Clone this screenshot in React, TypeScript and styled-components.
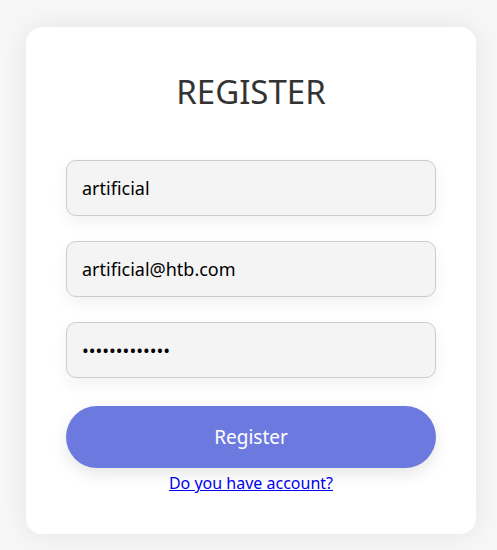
import React from "react";
import styled, { createGlobalStyle } from "styled-components";

const Global = createGlobalStyle`
  html, body { margin: 0; padding: 0; background: #f7f7f7; }
  body { font-family: "Noto Sans", "Open Sans", sans-serif; }
`;

const Page = styled.div`
  padding: 27px 21px 16px 26px;
`;

const Card = styled.form`
  background: #fff;
  border-radius: 16px;
  box-shadow: 0 0 30px rgba(0, 0, 0, 0.08);
  padding: 42px 40px 39px;
  display: flex;
  flex-direction: column;
  align-items: stretch;
`;

const Title = styled.h2`
  margin: 0 0 45px;
  text-align: center;
  font-size: 33px;
  font-weight: 400;
  color: #333;
  line-height: 1.4;
`;

const Field = styled.input`
  box-sizing: border-box;
  height: 56px;
  width: 100%;
  margin-bottom: 25px;
  padding: 0 15px;
  border: 1px solid #ccc;
  border-radius: 10px;
  background: #f4f4f4;
  font-family: inherit;
  font-size: 18px;
  color: #000;
  box-shadow: 0 6px 16px rgba(0, 0, 0, 0.06);
  outline: none;
`;

const Submit = styled.button`
  height: 62px;
  margin-top: 3px;
  border: none;
  border-radius: 31px;
  background: #6c7ae0;
  color: #fff;
  font-family: inherit;
  font-size: 19px;
  box-shadow: 0 6px 16px rgba(0, 0, 0, 0.1);
  cursor: pointer;
`;

const Link = styled.a`
  display: block;
  text-align: center;
  margin-top: 4px;
  font-size: 16px;
  color: #0000ee;
  text-decoration: underline;
  line-height: 1.4;
`;

export default function App() {
  return (
    <>
      <Global />
      <Page>
        <Card onSubmit={(e) => e.preventDefault()}>
          <Title>REGISTER</Title>
          <Field type="text" defaultValue="artificial" />
          <Field type="email" defaultValue="artificial@htb.com" />
          <Field type="password" defaultValue="artificial123" />
          <Submit type="submit">Register</Submit>
          <Link href="#">Do you have account?</Link>
        </Card>
      </Page>
    </>
  );
}
